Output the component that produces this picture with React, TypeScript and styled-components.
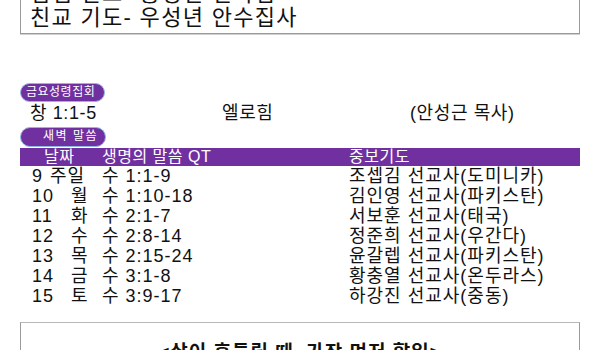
import React from "react";
import styled, { createGlobalStyle } from "styled-components";

const Global = createGlobalStyle`
  body {
    margin: 0;
    background: #fff;
    font-family: "Liberation Sans", "Noto Sans CJK KR", sans-serif;
    color: #111;
    overflow: hidden;
  }
`;

const Page = styled.div`
  width: 560px;
  padding-left: 20px;
`;

const NoticeBox = styled.div`
  margin-top: -21px;
  border: 1px solid #9a9a9a;
  box-shadow: 0 1px 0 #d0d0d0;
  padding: 2px 9px 3px;
  font-size: 22px;
  line-height: 24px;
  letter-spacing: 1.3px;
`;

const Pill = styled.div<{ $w: number; $h: number; $indent: number; $ls: number }>`
  width: ${p => p.$w}px;
  height: ${p => p.$h}px;
  box-sizing: border-box;
  border-radius: 10px;
  background: #7030a0;
  border: 1.5px solid #8fb8e0;
  color: #fff;
  font-size: 12px;
  line-height: ${p => p.$h - 3}px;
  padding-left: ${p => p.$indent}px;
  letter-spacing: ${p => p.$ls}px;
`;

const Section = styled.div<{ $top: number }>`
  margin-top: ${p => p.$top}px;
`;

const SermonRow = styled.div`
  display: grid;
  grid-template-columns: 192px 188px 1fr;
  padding-left: 10px;
  height: 22px;
  font-size: 18px;
  line-height: 22px;
  letter-spacing: 0.6px;
`;

const Table = styled.div`
  margin-top: 1px;
`;

const Row = styled.div<{ $head?: boolean }>`
  display: grid;
  grid-template-columns: 70px 247px 1fr;
  padding-left: ${p => (p.$head ? 24 : 12)}px;
  height: ${p => (p.$head ? 18 : 20)}px;
  line-height: ${p => (p.$head ? 18 : 20)}px;
  background: ${p => (p.$head ? "#7030a0" : "transparent")};
  color: ${p => (p.$head ? "#fff" : "#111")};
  font-size: ${p => (p.$head ? 16 : 18)}px;
  letter-spacing: ${p => (p.$head ? 0.5 : 1)}px;
`;

const HeadCell = styled.span<{ $shift?: number }>`
  margin-left: ${p => p.$shift ?? 0}px;
`;

const Num = styled.span<{ $w: number }>`
  display: inline-block;
  width: ${p => p.$w}px;
`;

const BottomBox = styled.div`
  margin-top: 16px;
  border: 1px solid #9a9a9a;
  border-top-color: #b8b8b8;
  height: 40px;
  text-align: center;
  font-size: 19px;
  font-weight: bold;
  padding-top: 14px;
  letter-spacing: 1px;
`;

const days = [
  { n: "9", d: "주일", v: "수 1:1-9", p: "조셉김 선교사(도미니카)" },
  { n: "10", d: "월", v: "수 1:10-18", p: "김인영 선교사(파키스탄)" },
  { n: "11", d: "화", v: "수 2:1-7", p: "서보훈 선교사(태국)" },
  { n: "12", d: "수", v: "수 2:8-14", p: "정준희 선교사(우간다)" },
  { n: "13", d: "목", v: "수 2:15-24", p: "윤갈렙 선교사(파키스탄)" },
  { n: "14", d: "금", v: "수 3:1-8", p: "황충열 선교사(온두라스)" },
  { n: "15", d: "토", v: "수 3:9-17", p: "하강진 선교사(중동)" },
];

export default function App() {
  return (
    <Page>
      <Global />
      <NoticeBox>
        <div>김샘 선교- 홍성민 선사님</div>
        <div>친교 기도- 우성년 안수집사</div>
      </NoticeBox>

      <Section $top={49}>
        <Pill $w={85} $h={19} $indent={5} $ls={0.5}>금요성령집회</Pill>
        <SermonRow>
          <span>창 1:1-5</span>
          <span>엘로힘</span>
          <span>(안성근 목사)</span>
        </SermonRow>
      </Section>

      <Section $top={3}>
        <Pill $w={86} $h={20} $indent={22} $ls={1.5}>새벽 말씀</Pill>
        <Table>
          <Row $head>
            <HeadCell>날짜</HeadCell>
            <HeadCell $shift={-12}>생명의 말씀 QT</HeadCell>
            <HeadCell $shift={-12}>중보기도</HeadCell>
          </Row>
          {days.map(r => (
            <Row key={r.n}>
              <span>
                <Num $w={r.d.length > 1 ? 18 : 39}>{r.n}</Num>
                {r.d}
              </span>
              <span>{r.v}</span>
              <span>{r.p}</span>
            </Row>
          ))}
        </Table>
      </Section>

      <BottomBox>&lt;삶이 흔들릴 때, 가장 먼저 할일&gt;</BottomBox>
    </Page>
  );
}
